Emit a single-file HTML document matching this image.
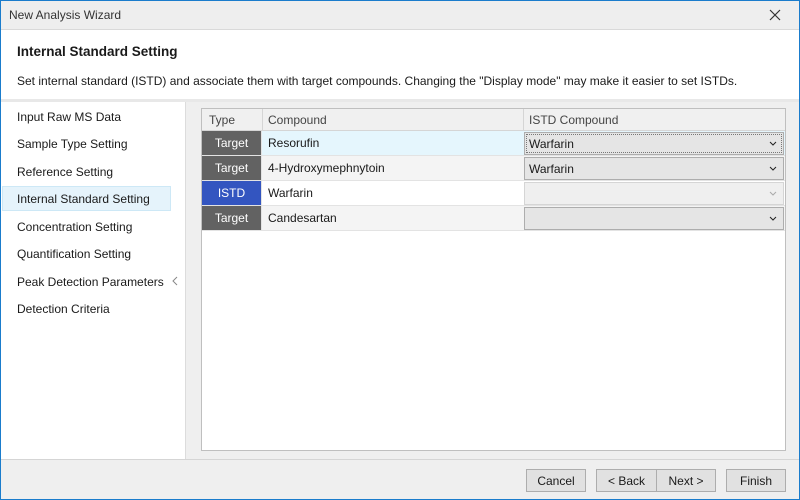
<!DOCTYPE html>
<html><head><meta charset="utf-8"><style>
*{box-sizing:border-box;margin:0;padding:0}
body{width:800px;height:500px;overflow:hidden;font-family:"Segoe UI","Liberation Sans",sans-serif;font-size:12px;color:#1a1a1a;background:#fff;position:relative}
.win{position:absolute;left:0;top:0;width:800px;height:500px;background:#fff}
.bord{position:absolute;left:0;top:0;width:800px;height:500px;border:1px solid #1a7ccc;pointer-events:none}
.title{position:absolute;left:0;top:0;width:800px;height:30px;background:#eeeeee;border-bottom:1px solid #d9d9d9}
.title span{position:absolute;left:9px;top:8px;font-size:12px;color:#333}
.x{position:absolute;left:768px;top:8px}
.h1{position:absolute;left:17px;top:44px;font-weight:bold;font-size:13.5px}
.desc{position:absolute;left:17px;top:74px;font-size:12px}
.sep{position:absolute;left:0;top:99px;width:800px;height:3px;background:#e8e8e8}
.nav{position:absolute;left:0;top:102px;width:186px;height:357px;background:#fff;border-right:1px solid #dcdcdc}
.nav div{position:absolute;left:17px;font-size:12px}
.sel{position:absolute;left:2px;width:169px;height:25px;background:#e5f3fb;border:1px solid #cde8f6}
.right{position:absolute;left:186px;top:102px;width:614px;height:357px;background:#efefef}
.grid{position:absolute;left:201px;top:108px;width:585px;height:343px;background:#fff;border:1px solid #bfbfbf}
.row{position:absolute;left:0;width:583px;height:25px;border-bottom:1px solid #e3e3e3}
.row .t{position:absolute;left:0;top:0;width:60px;height:24px;color:#fff;text-align:center;line-height:25px;border-right:1px solid #e3e3e3}
.row .c{position:absolute;left:66px;top:0;line-height:25px}
.cb{position:absolute;left:322px;top:1px;width:260px;height:23px;border:1px solid #adadad;background:#e5e5e5;line-height:22px;padding-left:4px}
.cb svg{position:absolute;right:6px;top:8px}
.hdr{position:absolute;left:0;top:0;width:583px;height:22px;background:#f0f0f0;border-bottom:1px solid #d5d5d5;color:#444}
.hdr span{position:absolute;top:4px}
.vl{position:absolute;top:0;height:22px;width:1px;background:#d5d5d5}
.foot{position:absolute;left:0;top:459px;width:800px;height:41px;background:#efefef;border-top:1px solid #d5d5d5}
.btn{position:absolute;top:9px;height:23px;border:1px solid #adadad;background:#e1e1e1;text-align:center;line-height:22px}
</style></head><body><div class="win">
<div class="title"><span>New Analysis Wizard</span>
<svg class="x" width="14" height="14" viewBox="0 0 14 14"><path d="M2 2L12 12M12 2L2 12" stroke="#333" stroke-width="1.2"/></svg></div>
<div class="h1">Internal Standard Setting</div>
<div class="desc">Set internal standard (ISTD) and associate them with target compounds. Changing the "Display mode" may make it easier to set ISTDs.</div>
<div class="sep"></div>
<div class="nav">
<div class="sel" style="left:2px;top:84px"></div>
<div style="top:8px">Input Raw MS Data</div>
<div style="top:35px">Sample Type Setting</div>
<div style="top:63px">Reference Setting</div>
<div style="top:90px">Internal Standard Setting</div>
<div style="top:118px">Concentration Setting</div>
<div style="top:145px">Quantification Setting</div>
<div style="top:173px">Peak Detection Parameters</div>
<svg style="position:absolute;left:172px;top:174px" width="6" height="10" viewBox="0 0 6 10"><path d="M5 1L1 5L5 9" stroke="#888" fill="none"/></svg>
<div style="top:200px">Detection Criteria</div>
</div>
<div class="right"></div>
<div class="grid">
<div class="hdr"><span style="left:7px">Type</span><div class="vl" style="left:60px"></div><span style="left:66px">Compound</span><div class="vl" style="left:321px"></div><span style="left:327px">ISTD Compound</span></div>
<div class="row" style="top:22px;background:#e5f6fd"><div class="t" style="background:#626262">Target</div><div class="c">Resorufin</div><div class="cb" style="outline:1px dotted #777;outline-offset:-3px">Warfarin<svg width="8" height="5" viewBox="0 0 8 5"><path d="M1 1L4 4L7 1" stroke="#222" fill="none"/></svg></div></div>
<div class="row" style="top:47px;background:#f4f4f4"><div class="t" style="background:#626262">Target</div><div class="c">4-Hydroxymephnytoin</div><div class="cb">Warfarin<svg width="8" height="5" viewBox="0 0 8 5"><path d="M1 1L4 4L7 1" stroke="#222" fill="none"/></svg></div></div>
<div class="row" style="top:72px;background:#fff"><div class="t" style="background:#3355c0">ISTD</div><div class="c">Warfarin</div><div class="cb" style="background:#efefef;border-color:#d5d5d5"><svg width="8" height="5" viewBox="0 0 8 5"><path d="M1 1L4 4L7 1" stroke="#aaa" fill="none"/></svg></div></div>
<div class="row" style="top:97px;background:#f4f4f4"><div class="t" style="background:#626262">Target</div><div class="c">Candesartan</div><div class="cb"><svg width="8" height="5" viewBox="0 0 8 5"><path d="M1 1L4 4L7 1" stroke="#222" fill="none"/></svg></div></div>
</div>
<div class="foot">
<div class="btn" style="left:526px;width:60px">Cancel</div>
<div class="btn" style="left:596px;width:61px">&lt; Back</div>
<div class="btn" style="left:656px;width:60px">Next &gt;</div>
<div class="btn" style="left:726px;width:60px">Finish</div>
</div>
<div class="bord"></div>
</div></body></html>
